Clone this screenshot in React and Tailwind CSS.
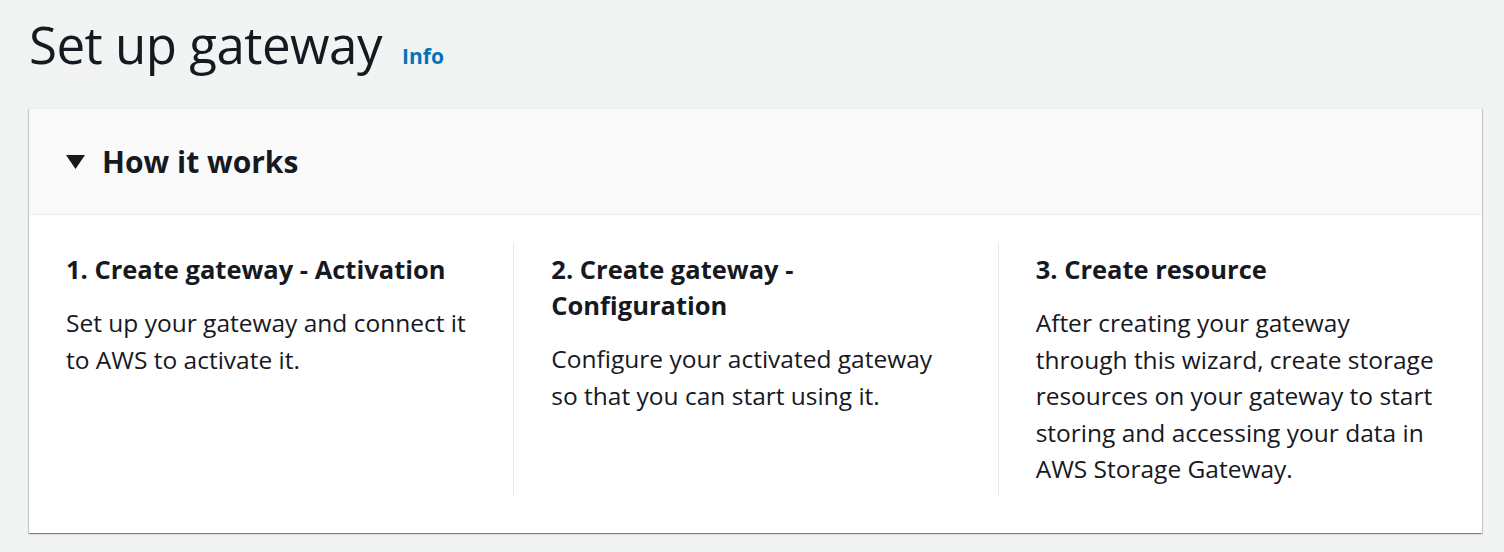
import React from 'react';

const steps = [
  {
    title: '1. Create gateway - Activation',
    text: 'Set up your gateway and connect it to AWS to activate it.',
  },
  {
    title: '2. Create gateway - Configuration',
    text: 'Configure your activated gateway so that you can start using it.',
  },
  {
    title: '3. Create resource',
    text: 'After creating your gateway through this wizard, create storage resources on your gateway to start storing and accessing your data in AWS Storage Gateway.',
  },
];

const App = () => {
  return (
    <div
      className="min-h-[552px] bg-[#f2f3f3] pl-[29px] pr-[22px] pt-[13px] pb-[19px] text-[#16191f]"
      style={{ fontFamily: '"Open Sans", "Noto Sans", Arial, sans-serif' }}
    >
      <div className="flex items-baseline gap-5 h-[95px]">
        <h1 className="text-[51px] leading-[62px] font-normal tracking-[-0.5px]">Set up gateway</h1>
        <a href="#" className="text-[21px] font-bold text-[#0073bb]">Info</a>
      </div>

      <div className="bg-white border-t border-[#eaeded] shadow-[0_1px_1px_0_rgba(0,28,36,0.3),1px_1px_1px_0_rgba(0,28,36,0.15),-1px_1px_1px_0_rgba(0,28,36,0.15)]">
        <div className="h-[106px] bg-[#fafafa] border-b border-[#eaeded] flex items-center px-[37px] gap-[17px]">
          <svg width="19" height="14" viewBox="0 0 19 14" className="mt-[1px]">
            <polygon points="0,0 19,0 9.5,14" fill="#16191f" />
          </svg>
          <h2 className="text-[30px] font-bold leading-[36px]">How it works</h2>
        </div>

        <div className="grid grid-cols-3 pt-[27px] pb-[37px]">
          {steps.map((s, i) => (
            <div
              key={s.title}
              className={
                'pt-[9px] pb-[8px] pl-[37px] ' + (i === 0 ? '' : 'border-l border-[#eaeded]')
              }
            >
              <div className="w-[408px]">
                <h3 className="text-[25.5px] font-bold leading-[36px]">{s.title}</h3>
                <p className="text-[24.5px] leading-[36.5px] mt-[18px]">{s.text}</p>
              </div>
            </div>
          ))}
        </div>
      </div>
    </div>
  );
};

export default App;
